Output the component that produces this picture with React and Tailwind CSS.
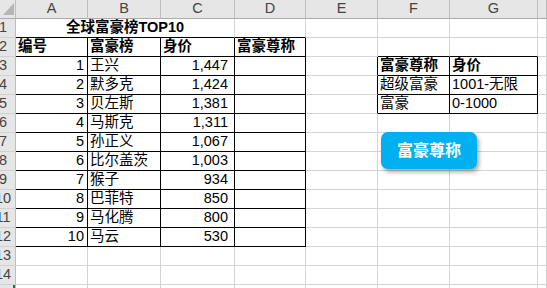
import React from 'react';

const cols = ['A', 'B', 'C', 'D', 'E', 'F', 'G', ''];

const ranking = [
  [1, '王兴', '1,447'],
  [2, '默多克', '1,424'],
  [3, '贝左斯', '1,381'],
  [4, '马斯克', '1,311'],
  [5, '孙正义', '1,067'],
  [6, '比尔盖茨', '1,003'],
  [7, '猴子', '934'],
  [8, '巴菲特', '850'],
  [9, '马化腾', '800'],
  [10, '马云', '530'],
];

const titles = {
  3: [{ t: '富豪尊称', b: true }, { t: '身价', b: true }],
  4: [{ t: '超级富豪' }, { t: '1001-无限' }],
  5: [{ t: '富豪' }, { t: '0-1000' }],
};

// one cell, draws its own right / bottom line
function Cell({ children, right, bottom, align = 'left', bold, span }) {
  return (
    <div
      className={`h-[19px] flex items-center overflow-hidden whitespace-nowrap text-[14.5px] text-black border-r border-b ${
        right ? 'border-r-black' : 'border-r-[#d4d4d4]'
      } ${bottom ? 'border-b-black' : 'border-b-[#d4d4d4]'} ${
        align === 'right' ? 'justify-end pr-[3px]' : align === 'center' ? 'justify-center' : 'justify-start pl-[2px]'
      } ${bold ? 'font-bold' : ''} ${span ? 'col-span-3' : ''}`}
    >
      {children}
    </div>
  );
}

function RowHead({ n }) {
  return (
    <div className="h-[19px] relative overflow-hidden bg-[#e6e6e6] border-r border-b border-r-[#bdbdbd] border-b-[#d0d0d0]">
      <div className="absolute left-[-10px] top-0 w-[26px] h-[18px] flex items-center justify-center text-[14.5px] text-[#444]">
        {n}
      </div>
      {n === 15 && <div className="absolute right-0 top-0 w-[2px] h-[19px] bg-[#217346]" />}
    </div>
  );
}

function buildRow(r) {
  const cells = [];
  if (r === 1) {
    cells.push(
      <Cell key="t" span bottom align="center" bold>
        全球富豪榜TOP10
      </Cell>
    );
    cells.push(<Cell key="d" bottom />);
    cells.push(<Cell key="e" />);
    cells.push(<Cell key="f" />);
    cells.push(<Cell key="g" />);
    cells.push(<Cell key="h" />);
    return cells;
  }
  if (r === 2) {
    cells.push(<Cell key="a" right bottom bold>编号</Cell>);
    cells.push(<Cell key="b" right bottom bold>富豪榜</Cell>);
    cells.push(<Cell key="c" right bottom bold>身价</Cell>);
    cells.push(<Cell key="d" right bottom bold>富豪尊称</Cell>);
    cells.push(<Cell key="e" />);
    cells.push(<Cell key="f" bottom />);
    cells.push(<Cell key="g" bottom />);
    cells.push(<Cell key="h" />);
    return cells;
  }
  const item = ranking[r - 3];
  if (item) {
    cells.push(<Cell key="a" right bottom align="right">{item[0]}</Cell>);
    cells.push(<Cell key="b" right bottom>{item[1]}</Cell>);
    cells.push(
      <div key="c" className="h-[19px] flex items-center justify-end pr-[6px] text-[14.5px] text-black border-r border-b border-r-black border-b-black">
        {item[2]}
      </div>
    );
    cells.push(<Cell key="d" right bottom />);
  } else {
    cells.push(<Cell key="a" />, <Cell key="b" />, <Cell key="c" />, <Cell key="d" />);
  }
  const t = titles[r];
  if (t) {
    cells.push(<Cell key="e" right />);
    cells.push(<Cell key="f" right bottom bold={t[0].b}>{t[0].t}</Cell>);
    cells.push(<Cell key="g" right bottom bold={t[1].b}>{t[1].t}</Cell>);
  } else {
    cells.push(<Cell key="e" />, <Cell key="f" />, <Cell key="g" />);
  }
  cells.push(<Cell key="h" />);
  return cells;
}

export default function App() {
  const rows = Array.from({ length: 15 }, (_, i) => i + 1);

  return (
    <div
      className="relative w-[547px] h-[288px] overflow-hidden bg-white"
      style={{ fontFamily: '"Liberation Sans", "Noto Sans CJK SC", sans-serif' }}
    >
      <div className="grid grid-cols-[16px_72px_73px_74px_71px_72px_72px_88px_1fr]">
        {/* corner */}
        <div className="h-[19px] relative bg-[#e6e6e6] border-r border-b border-r-[#bdbdbd] border-b-[#ababab]">
          <svg className="absolute left-[3px] top-[3px]" width="11" height="12" viewBox="0 0 11 12">
            <polygon points="11,0 11,12 0,12" fill="#b5b5b5" />
          </svg>
        </div>
        {cols.map((c, i) => (
          <div
            key={i}
            className="h-[19px] flex items-center justify-center bg-[#e6e6e6] text-[14.5px] text-[#444] border-r border-b border-r-[#bdbdbd] border-b-[#ababab]"
          >
            {c}
          </div>
        ))}

        {rows.map((r) => (
          <React.Fragment key={r}>
            <RowHead n={r} />
            {buildRow(r)}
          </React.Fragment>
        ))}
      </div>

      <button
        type="button"
        className="absolute left-[381px] top-[132px] w-[96px] h-[37px] rounded-[7px] bg-[#00b0f0] text-white text-[16px] font-bold flex items-center justify-center shadow-[2px_3px_4px_rgba(0,0,0,0.35)]"
      >
        富豪尊称
      </button>
    </div>
  );
}
